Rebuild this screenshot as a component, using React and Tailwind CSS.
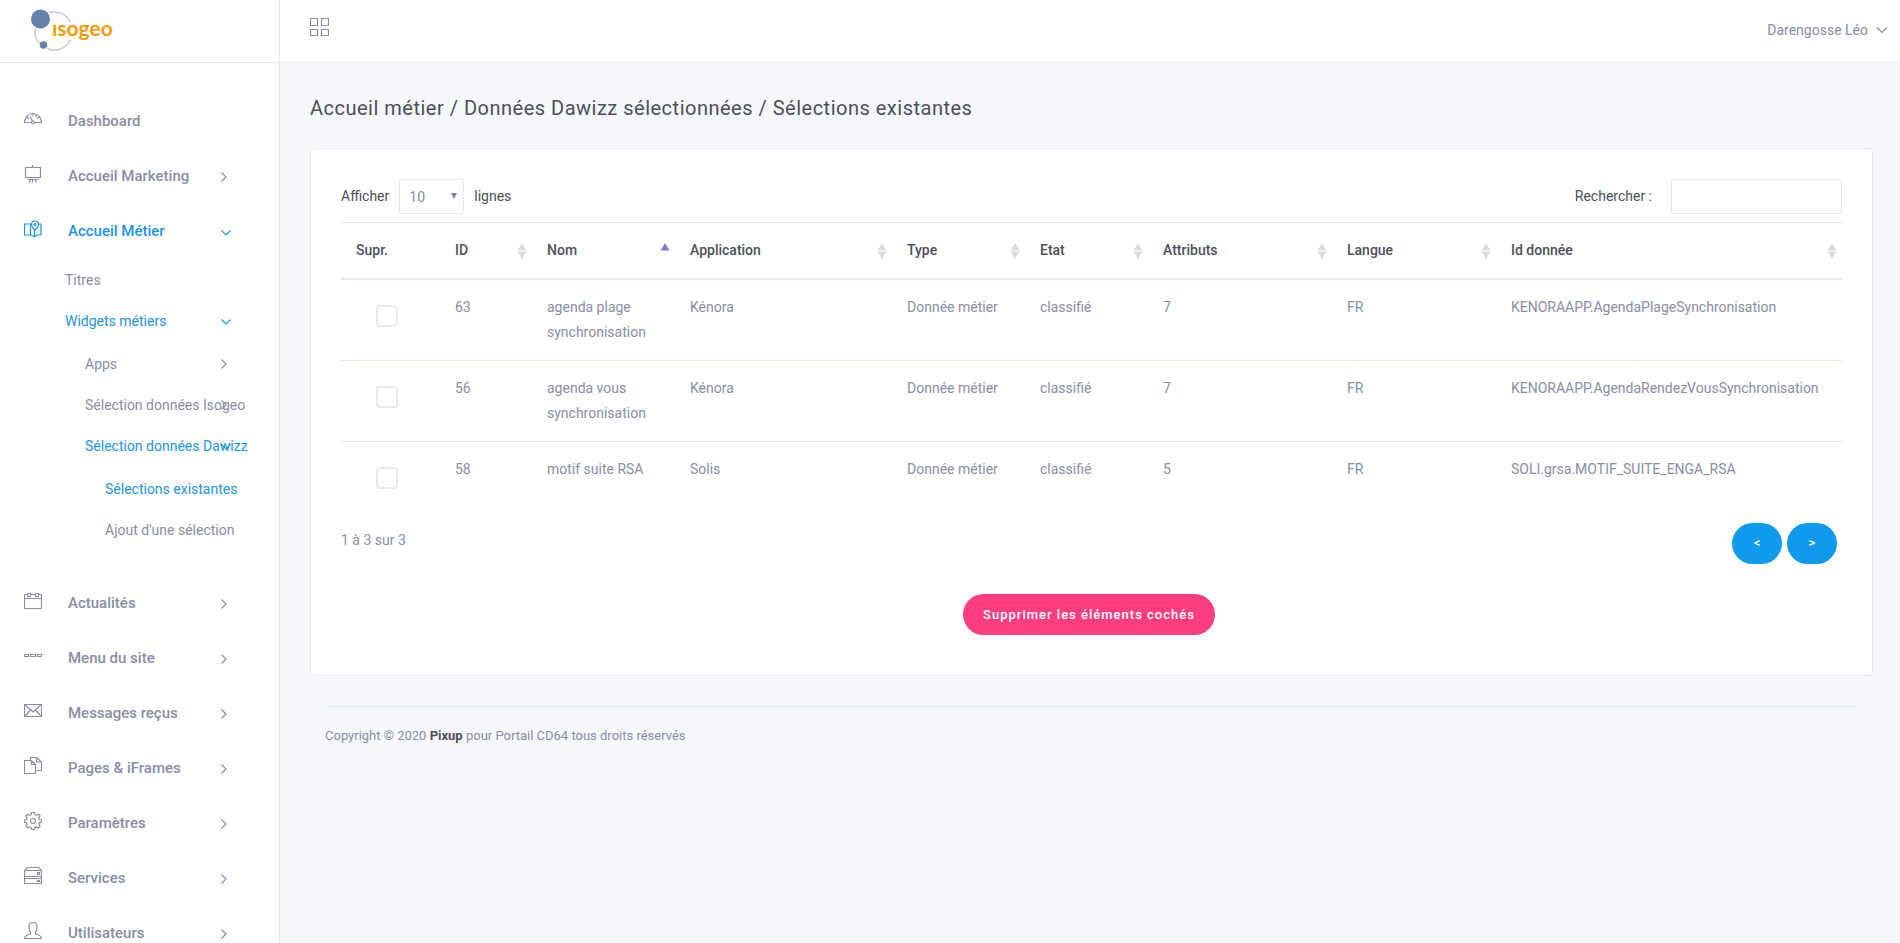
import clsx from 'clsx';

const icons = {
  dashboard: (
    <>
      <path d="M7 12.500H.5C.5 7.500 4.200 3.500 9 3.500s8.500 4 8.500 9H11" />
      <circle cx="9" cy="12.500" r="1.500" />
      <path d="M8.500 11 6 6.500M9 3.500V6M3 7l2 1.500M15 7l-2 1.500M12.500 4.500 11.500 7" />
    </>
  ),
  easel: (
    <>
      <path d="M1.500 2.500h15v10h-15zM8.500 0v2.500M3.500 14.500h11" />
      <path d="M6.500 14.500 5 17.500M8.500 14.500v3M11 14.500l1.500 3" />
    </>
  ),
  map: (
    <>
      <path d="M8 4.500 6.500 4H.5v11h6V4.500M6.500 15l4 1.500 3-1.500h3.500V4h-2M10.500 16.500V10" />
      <path d="M11 10.500C9 8 7.500 6.500 7.500 4.500a3.500 3.500 0 0 1 7 0C14.500 6.500 13 8 11 10.500z" />
      <circle cx="11" cy="4.500" r="1" />
    </>
  ),
  calendar: (
    <path d="M3.500 2.500h-3v14h17v-14h-3M6.500 2.500h5M.5 6.500h17M3.500 1.500h3v3h-3zM11.500 1.500h3v3h-3z" />
  ),
  menu: <path d="M.5 7.500h4v2h-4zM6.500 7.500h5v2h-5zM13.500 7.500h4v2h-4z" />,
  mail: <path d="M.5 2.500h17v12H.5zM.5 2.500 9 10l8.500-7.500M.5 14.500 6.500 8M17.500 14.500 11.500 8" />,
  pages: (
    <>
      <path d="M.5 3.500h7l4 4v9H.5zM7.500 3.500v4h4" />
      <path d="M6.500 3V.5h6l5 4.500v8.500h-5M12.500.5V5h5" />
    </>
  ),
  gear: (
    <>
      <path d="M7.600.5h2.800l.5 2.200 1.500.7 2-1.200 1.700 1.700-1.200 2 .6 1.600 2.100.4v2.300l-2.100.5-.6 1.500 1.200 2-1.800 1.900-2-1.300-1.400.6-.5 2.100H7.600l-.5-2.100-1.500-.6-1.900 1.200-1.900-1.800 1.300-2-.6-1.500-2.100-.5V7.900l2.100-.4.6-1.600-1.200-2 1.800-1.700 1.900 1.200 1.500-.7z" />
      <circle cx="9" cy="9" r="2.500" />
    </>
  ),
  server: (
    <>
      <path d="M.5 3.500v13h17v-13l-3-3h-11zM.5 3.500h17M.5 9.500h17M.5 11.500h17" />
      <path d="M13.500 5.500h2v2h-2zM13.500 13.500h2v1h-2z" />
    </>
  ),
  user: (
    <path d="M.5 16.500h17c0-2.500-2-3.500-6-4.500v-1.500c1-1 1.500-3 1.500-5.500C13 2 11.500.5 9 .5S5 2 5 5c0 2.500.5 4.500 1.500 5.500V12c-4 1-6 2-6 4.500z" />
  ),
};

const subMenu = [
  { label: 'Titres', level: 1 },
  { label: 'Widgets métiers', level: 1, arrow: 'down', active: true },
  { label: 'Apps', level: 2, arrow: 'right', first: true },
  { label: 'Sélection données Isogeo', level: 2, arrow: 'right' },
  { label: 'Sélection données Dawizz', level: 2, arrow: 'down', active: true },
  { label: 'Sélections existantes', level: 3, active: true, first: true },
  { label: "Ajout d'une sélection", level: 3 },
];

const menu = [
  { label: 'Dashboard', icon: 'dashboard' },
  { label: 'Accueil Marketing', icon: 'easel', arrow: 'right' },
  { label: 'Accueil Métier', icon: 'map', arrow: 'down', active: true, children: subMenu },
  { label: 'Actualités', icon: 'calendar', arrow: 'right' },
  { label: 'Menu du site', icon: 'menu', arrow: 'right' },
  { label: 'Messages reçus', icon: 'mail', arrow: 'right' },
  { label: 'Pages & iFrames', icon: 'pages', arrow: 'right' },
  { label: 'Paramètres', icon: 'gear', arrow: 'right' },
  { label: 'Services', icon: 'server', arrow: 'right' },
  { label: 'Utilisateurs', icon: 'user', arrow: 'right' },
];

const columns = [
  { label: 'Supr.', width: 'w-[99px]' },
  { label: 'ID', width: 'w-[92px]', sort: 'both' },
  { label: 'Nom', width: 'w-[143px]', sort: 'asc' },
  { label: 'Application', width: 'w-[217px]', sort: 'both' },
  { label: 'Type', width: 'w-[133px]', sort: 'both' },
  { label: 'Etat', width: 'w-[123px]', sort: 'both' },
  { label: 'Attributs', width: 'w-[184px]', sort: 'both' },
  { label: 'Langue', width: 'w-[164px]', sort: 'both' },
  { label: 'Id donnée', width: 'w-[346px]', sort: 'both' },
];

const rows = [
  { id: 63, nom: 'agenda plage synchronisation', app: 'Kénora', attributs: 7, donnee: 'KENORAAPP.AgendaPlageSynchronisation' },
  { id: 56, nom: 'agenda vous synchronisation', app: 'Kénora', attributs: 7, donnee: 'KENORAAPP.AgendaRendezVousSynchronisation' },
  { id: 58, nom: 'motif suite RSA', app: 'Solis', attributs: 5, donnee: 'SOLI.grsa.MOTIF_SUITE_ENGA_RSA' },
];

function Logo() {
  return (
    <svg width="90" height="44" viewBox="0 0 90 44" role="img" aria-label="isogeo">
      <g fill="none" stroke="#c6cad8" strokeWidth="1.500">
        <path d="M19 3.500C29 1.500 37 6 40.500 13" />
        <path d="M5.500 19C4 25 6 31 9.500 34.500" />
        <path d="M17 39.500C26 43.500 36 39.500 40.500 31" />
      </g>
      <circle cx="10.500" cy="10" r="9.500" fill="#6680aa" />
      <circle cx="13.500" cy="36" r="3.800" fill="#6680aa" />
      <text x="22" y="27" fontFamily="Lato, sans-serif" fontSize="21" fontWeight="700" fill="#f59c0b">
        ısogeo
      </text>
    </svg>
  );
}

function Arrow({ dir }) {
  return (
    <svg
      className={clsx('absolute', dir === 'down' ? 'right-12 mt-[3px]' : 'right-[50px] mt-px')}
      width="10"
      height="10"
      viewBox="0 0 10 10"
      fill="none"
      stroke="currentColor"
      strokeWidth="1.200"
      aria-hidden="true"
    >
      <path d={dir === 'down' ? 'M.5 2.500 5 7l4.500-4.500' : 'M2.500.5 7 5 2.500 9.500'} />
    </svg>
  );
}

function SubItem({ item }) {
  return (
    <li className={clsx(item.first && 'mt-0.5')}>
      <a
        href="#"
        className={clsx(
          'relative flex h-[41px] items-center text-sm whitespace-nowrap',
          item.level === 1 && 'pl-[65px]',
          item.level === 2 && 'pl-[85px]',
          item.level === 3 && 'pl-[105px]',
          item.active && 'text-[#1b94ec]'
        )}
      >
        {item.label}
        {item.arrow && <Arrow dir={item.arrow} />}
      </a>
    </li>
  );
}

function Sidebar() {
  return (
    <aside className="flex w-[280px] shrink-0 flex-col overflow-hidden border-r border-[#e4eaf5] bg-white">
      <div className="flex h-[63px] shrink-0 items-center border-b border-[#e4eaf5] pl-[30px]">
        <Logo />
      </div>
      <nav className="pt-[31px]">
        <ul>
          {menu.map((item) => (
            <li key={item.label}>
              <a
                href="#"
                className={clsx(
                  'relative flex h-[55px] items-center pl-6 text-[15px] font-medium',
                  item.active && 'text-[#1b94ec]'
                )}
              >
                <svg
                  className="mr-[26px] mb-[5px]"
                  width="18"
                  height="18"
                  viewBox="0 0 18 18"
                  fill="none"
                  stroke="currentColor"
                  strokeWidth="1.200"
                  aria-hidden="true"
                >
                  {icons[item.icon]}
                </svg>
                {item.label}
                {item.arrow && <Arrow dir={item.arrow} />}
              </a>
              {item.children && (
                <ul className="pb-[26px]">
                  {item.children.map((child) => (
                    <SubItem key={child.label} item={child} />
                  ))}
                </ul>
              )}
            </li>
          ))}
        </ul>
      </nav>
    </aside>
  );
}

function SortIcon({ sort }) {
  return (
    <svg className="absolute top-5 right-[5px]" width="10" height="16" viewBox="0 0 10 16" aria-hidden="true">
      <path d="M5 0 9.500 7.500h-9z" fill={sort === 'asc' ? '#7b7fdc' : '#dcdcdc'} />
      {sort === 'both' && <path d="M5 16 .5 8.500h9z" fill="#dcdcdc" />}
    </svg>
  );
}

function SelectionTable() {
  return (
    <table className="w-full table-fixed border-t border-[#e4eaf5] text-left text-sm leading-[25px]">
      <thead>
        <tr className="h-14 border-b-2 border-[#e4eaf5] text-[#4d4f5c]">
          {columns.map((col) => (
            <th key={col.label} className={clsx('relative px-[15px] font-medium', col.width)}>
              {col.label}
              {col.sort && <SortIcon sort={col.sort} />}
            </th>
          ))}
        </tr>
      </thead>
      <tbody>
        {rows.map((row) => (
          <tr key={row.id} className="h-[81px] border-b border-[#e4eaf5] align-top last:border-b-0">
            <td className="p-[15px]">
              <input
                type="checkbox"
                aria-label={`Supprimer ${row.nom}`}
                className="mt-2.5 ml-5 block size-[22px] appearance-none rounded-sm border-2 border-[#e4eaf5] bg-white checked:bg-[#0f9aee]"
              />
            </td>
            <td className="p-[15px]">{row.id}</td>
            <td className="p-[15px]">{row.nom}</td>
            <td className="p-[15px]">{row.app}</td>
            <td className="p-[15px]">Donnée métier</td>
            <td className="p-[15px]">classifié</td>
            <td className="p-[15px]">{row.attributs}</td>
            <td className="p-[15px]">FR</td>
            <td className="py-[15px] pl-[15px] whitespace-nowrap">{row.donnee}</td>
          </tr>
        ))}
      </tbody>
    </table>
  );
}

export default function App() {
  return (
    <div className="flex h-screen overflow-hidden bg-[#f5f7fb] font-['Roboto',sans-serif] text-[#8a8da7]">
      <Sidebar />

      <div className="min-w-0 flex-1">
        <header className="flex h-[63px] items-center justify-between border-b border-[#e4eaf5] bg-white pr-3 pb-0.5 pl-[30px]">
          <button type="button" aria-label="Menu" className="mb-1.5">
            <svg width="19" height="18" viewBox="0 0 19 18" fill="none" stroke="currentColor" strokeWidth="1.200">
              <path d="M.5.500h7v7h-7zM11.500.5h7v7h-7zM.5 11.500h7v6h-7zM11.500 11.500h7v6h-7z" />
            </svg>
          </button>
          <button type="button" className="flex items-center gap-2 text-sm">
            Darengosse Léo
            <svg width="12" height="10" viewBox="0 0 12 10" fill="none" stroke="currentColor" strokeWidth="1.200" aria-hidden="true">
              <path d="M1 2.500 6 7.500l5-5" />
            </svg>
          </button>
        </header>

        <main className="pt-[30px] pr-[27px] pl-[30px]">
          <h1 className="text-xl leading-[30px] tracking-wide text-[#4d4f5c]">
            Accueil métier / Données Dawizz sélectionnées / Sélections existantes
          </h1>

          <section className="mt-[25px] rounded border border-[#e4eaf5] bg-white px-[30px] pt-[30px] pb-10">
            <div className="mb-2 flex items-center justify-between text-sm leading-[34px] text-[#4d4f5c]">
              <label className="flex items-start gap-2.5">
                Afficher
                <span className="relative">
                  <select className="block h-[35px] w-[65px] appearance-none rounded-xs border border-[#e4eaf5] bg-white pb-0.5 pl-[9px] text-[#8a8da7]">
                    <option>10</option>
                    <option>25</option>
                    <option>50</option>
                    <option>100</option>
                  </select>
                  <svg className="pointer-events-none absolute top-3.5 right-[7px]" width="6" height="6" viewBox="0 0 6 6" aria-hidden="true">
                    <path d="M0 0h6L3 6z" fill="#8083a0" />
                  </svg>
                </span>
                lignes
              </label>
              <label className="flex items-start gap-[19px]">
                Rechercher :
                <input type="search" className="h-[35px] w-[171px] rounded-xs border border-[#e4eaf5] px-2" />
              </label>
            </div>

            <SelectionTable />

            <div className="flex items-start justify-between pt-px pr-[5px] text-sm">
              <p className="pt-[5px] leading-[25px]">1 à 3 sur 3</p>
              <div className="flex gap-[5px] text-[13px] font-medium text-white">
                <button type="button" className="h-[41px] w-[50px] rounded-full bg-[#0f9aee]">
                  &lt;
                </button>
                <button type="button" className="h-[41px] w-[50px] rounded-full bg-[#0f9aee]">
                  &gt;
                </button>
              </div>
            </div>

            <div className="mt-[30px] mr-[5px] flex justify-center">
              <button type="button" className="h-[41px] rounded-full bg-[#ff3d7f] px-5 text-[13px] font-medium tracking-[1px] text-white">
                Supprimer les éléments cochés
              </button>
            </div>
          </section>

          <footer className="mx-[15px] mt-[30px] border-t border-[#e4eaf5] pt-[19px] text-[13px]">
            Copyright © 2020 <strong className="font-bold text-[#4d4f5c]">Pixup</strong> pour Portail CD64 tous droits réservés
          </footer>
        </main>
      </div>
    </div>
  );
}
